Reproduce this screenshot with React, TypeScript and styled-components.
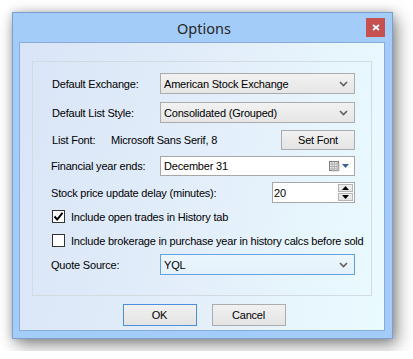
import styled, { createGlobalStyle } from 'styled-components';

const GlobalStyle = createGlobalStyle`
  body {
    margin: 0;
    background: #ffffff;
    font-family: "Liberation Sans", Arial, sans-serif;
  }
`;

function Chevron() {
  return (
    <svg width="9" height="6" viewBox="0 0 9 6">
      <polyline points="1,1 4.5,4.5 8,1" fill="none" stroke="#606060" strokeWidth="1.6" />
    </svg>
  );
}

function CalendarIcon() {
  return (
    <svg width="22" height="12" viewBox="0 0 22 12">
      <rect x="1.5" y="1.5" width="9" height="9" fill="#e6e6e6" stroke="#7a7a7a" />
      <path d="M1.5 4h9M1.5 6.5h9M1.5 9h9M4 1.5v9M6.5 1.5v9M9 1.5v9" stroke="#a8a8a8" strokeWidth="0.8" />
      <path d="M11 3v8H3" fill="none" stroke="#c8c8c8" />
      <polygon points="14,4 21,4 17.5,8" fill="#3b5f96" />
    </svg>
  );
}

function CheckMark() {
  return (
    <svg width="11" height="11" viewBox="0 0 11 11">
      <polyline points="1.5,5.5 4.2,8.5 9.5,1.8" fill="none" stroke="#000" strokeWidth="2" />
    </svg>
  );
}

export default function App() {
  return (
    <>
      <GlobalStyle />
      <Page>
        <Window>
          <TitleBar>
            <span />
            <Title>Options</Title>
            <CloseButton>
              <svg width="8" height="7" viewBox="0 0 8 7">
                <path d="M1 1l6 5M7 1l-6 5" stroke="#fff" strokeWidth="1.8" />
              </svg>
            </CloseButton>
          </TitleBar>
          <Client>
            <GroupBox>
              <Row $mt={11} $h={21}>
                <Label>Default Exchange:</Label>
                <Combo>
                  American Stock Exchange
                  <Chevron />
                </Combo>
              </Row>
              <Row $mt={8} $h={21}>
                <Label>Default List Style:</Label>
                <Combo>
                  Consolidated (Grouped)
                  <Chevron />
                </Combo>
              </Row>
              <FontRow $mt={7} $h={20}>
                <Label>List Font:</Label>
                <Label>Microsoft Sans Serif, 8</Label>
                <PushButton $h={20}>Set Font</PushButton>
              </FontRow>
              <Row $mt={6} $h={20}>
                <Label $dx={-1}>Financial year ends:</Label>
                <DateBox>
                  December 31
                  <CalendarIcon />
                </DateBox>
              </Row>
              <SpinRow $mt={6} $h={21}>
                <Label $dx={-1}>Stock price update delay (minutes):</Label>
                <SpinBox>
                  <SpinText>20</SpinText>
                  <SpinButtons>
                    <SpinHalf>
                      <svg width="7" height="4" viewBox="0 0 7 4">
                        <polygon points="0,4 7,4 3.5,0" fill="#000" />
                      </svg>
                    </SpinHalf>
                    <SpinHalf>
                      <svg width="7" height="4" viewBox="0 0 7 4">
                        <polygon points="0,0 7,0 3.5,4" fill="#000" />
                      </svg>
                    </SpinHalf>
                  </SpinButtons>
                </SpinBox>
              </SpinRow>
              <CheckRow $mt={7} $h={13}>
                <CheckBox>
                  <CheckMark />
                </CheckBox>
                <Label>Include open trades in History tab</Label>
              </CheckRow>
              <CheckRow $mt={11} $h={13}>
                <CheckBox />
                <Label>Include brokerage in purchase year in history calcs before sold</Label>
              </CheckRow>
              <Row $mt={7} $h={21}>
                <Label $dx={-1}>Quote Source:</Label>
                <Combo $focused>
                  YQL
                  <Chevron />
                </Combo>
              </Row>
            </GroupBox>
            <ButtonBar>
              <PushButton $h={22} $default>OK</PushButton>
              <PushButton $h={22}>Cancel</PushButton>
            </ButtonBar>
          </Client>
        </Window>
      </Page>
    </>
  );
}

const Page = styled.div`
  padding: 12px;
`;

const Window = styled.div`
  width: 381px;
  height: 327px;
  box-sizing: border-box;
  border: 1px solid #7d9fcf;
  background: #a4ccf8;
  padding: 0 7px 7px 6px;
  display: flex;
  flex-direction: column;
  box-shadow: 4px 6px 16px rgba(0, 0, 0, 0.45), 0 0 8px rgba(0, 0, 0, 0.18);
`;

const TitleBar = styled.div`
  height: 29px;
  flex: none;
  display: grid;
  grid-template-columns: 1fr auto 1fr;
  align-items: center;
`;

const Title = styled.div`
  font-family: "Segoe UI", "Noto Sans", "Open Sans", sans-serif;
  font-size: 14.5px;
  color: #262626;
  padding-left: 4px;
`;

const CloseButton = styled.div`
  justify-self: end;
  width: 19px;
  height: 19px;
  background: #c75050;
  display: flex;
  align-items: center;
  justify-content: center;
`;

const Client = styled.div`
  flex: 1;
  border: 1px solid #87acdc;
  background: linear-gradient(100deg, #d9e5f7 0%, #e3eefa 50%, #eafbff 100%);
  display: flex;
  flex-direction: column;
`;

const GroupBox = styled.div`
  margin: 18px 12px 0;
  height: 235px;
  box-sizing: border-box;
  border: 1px solid #d3dbe0;
  padding: 0 16px 0 19px;
  display: flex;
  flex-direction: column;
`;

const Row = styled.div<{ $mt: number; $h: number }>`
  margin-top: ${p => p.$mt}px;
  height: ${p => p.$h}px;
  display: grid;
  grid-template-columns: 108px 1fr;
  align-items: center;
`;

const FontRow = styled(Row)`
  grid-template-columns: 59px 1fr 74px;
`;

const SpinRow = styled(Row)`
  grid-template-columns: 1fr 83px;
`;

const CheckRow = styled.div<{ $mt: number; $h: number }>`
  margin-top: ${p => p.$mt}px;
  height: ${p => p.$h}px;
  display: flex;
  align-items: center;
  gap: 6px;
`;

const Label = styled.span<{ $dx?: number }>`
  font-size: 11px;
  letter-spacing: -0.2px;
  color: #000;
  white-space: nowrap;
  margin-left: ${p => p.$dx ?? 0}px;
`;

const Combo = styled.div<{ $focused?: boolean }>`
  height: 100%;
  box-sizing: border-box;
  border: 1px solid ${p => (p.$focused ? '#64a2e3' : '#acacac')};
  background: ${p =>
    p.$focused
      ? 'linear-gradient(#ebf6fd, #e4f1fb)'
      : 'linear-gradient(#f2f2f2, #e6e6e6)'};
  padding: 0 6px 0 3px;
  display: flex;
  align-items: center;
  justify-content: space-between;
  font-size: 11px;
  letter-spacing: -0.2px;
  color: #000;
`;

const PushButton = styled.div<{ $h: number; $default?: boolean }>`
  width: 74px;
  height: ${p => p.$h}px;
  box-sizing: border-box;
  border: 1px solid ${p => (p.$default ? '#4a90dc' : '#acacac')};
  background: linear-gradient(#f1f1f1, #e4e4e4);
  display: flex;
  align-items: center;
  justify-content: center;
  font-size: 11px;
  letter-spacing: -0.2px;
  color: #000;
`;

const DateBox = styled.div`
  height: 100%;
  box-sizing: border-box;
  border: 1px solid #a7a7a7;
  background: #fff;
  padding: 0 4px 0 3px;
  display: flex;
  align-items: center;
  justify-content: space-between;
  font-size: 11px;
  letter-spacing: -0.2px;
`;

const SpinBox = styled.div`
  height: 100%;
  box-sizing: border-box;
  border: 1px solid #a7a7a7;
  background: #fff;
  display: flex;
`;

const SpinText = styled.div`
  flex: 1;
  display: flex;
  align-items: center;
  padding-left: 1px;
  font-size: 11px;
  letter-spacing: -0.2px;
`;

const SpinButtons = styled.div`
  width: 15px;
  margin: 1px;
  display: flex;
  flex-direction: column;
  gap: 1px;
`;

const SpinHalf = styled.div`
  flex: 1;
  background: linear-gradient(#f0f0f0, #e3e3e3);
  border: 1px solid #b5b5b5;
  display: flex;
  align-items: center;
  justify-content: center;
`;

const CheckBox = styled.div`
  flex: none;
  width: 13px;
  height: 13px;
  box-sizing: border-box;
  border: 1px solid #333;
  background: #fff;
  display: flex;
  align-items: center;
  justify-content: center;
`;

const ButtonBar = styled.div`
  margin-top: 8px;
  padding-left: 4px;
  display: flex;
  justify-content: center;
  gap: 15px;
`;
